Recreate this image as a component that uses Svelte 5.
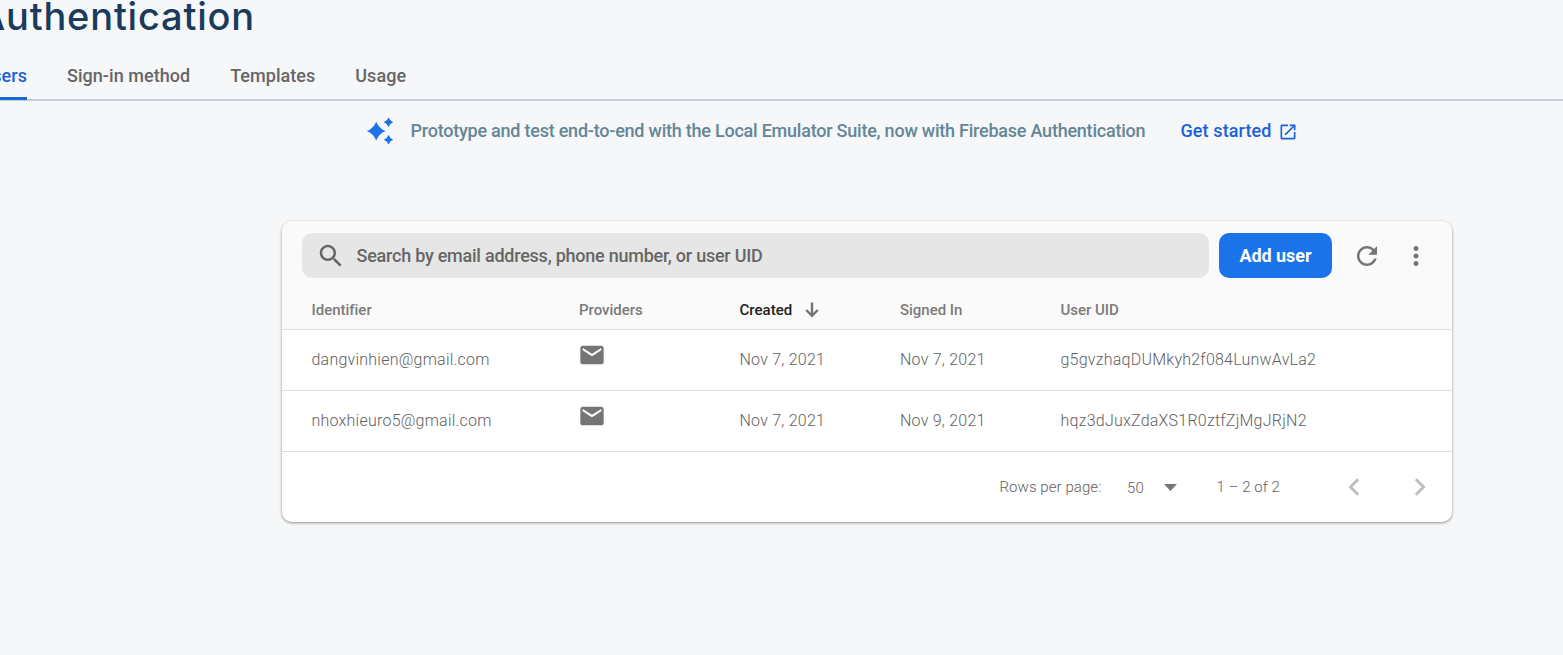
<script>
  const tabs = ['Sign-in method', 'Templates', 'Usage'];
  const users = [
    { id: 'dangvinhien@gmail.com', created: 'Nov 7, 2021', signedIn: 'Nov 7, 2021', uid: 'g5gvzhaqDUMkyh2f084LunwAvLa2' },
    { id: 'nhoxhieuro5@gmail.com', created: 'Nov 7, 2021', signedIn: 'Nov 9, 2021', uid: 'hqz3dJuxZdaXS1R0ztfZjMgJRjN2' }
  ];
</script>

<div class="page">
  <h1><span>Authentication</span></h1>
  <nav>
    <a class="active"><span>Users</span></a>
    {#each tabs as tab}
      <a><span>{tab}</span></a>
    {/each}
  </nav>

  <div class="banner">
    <svg class="spark" width="28" height="28" viewBox="0 0 28 28" fill="#1a73e8">
      <path d="M10.2 4.7Q12.9 11.4 19.6 14.1Q12.9 16.8 10.2 23.5Q7.5 16.8 .8 14.1Q7.5 11.4 10.2 4.7Z" />
      <path d="M22.5.6Q23.8 4 27.2 5.3Q23.8 6.6 22.5 10Q21.2 6.6 17.8 5.3Q21.2 4 22.5.6Z" />
      <path d="M22.5 18.1Q23.8 21.5 27.2 22.8Q23.8 24.1 22.5 27.5Q21.2 24.1 17.8 22.8Q21.2 21.5 22.5 18.1Z" />
    </svg>
    <span class="message">Prototype and test end-to-end with the Local Emulator Suite, now with Firebase Authentication</span>
    <a class="start"><span>Get started</span>
      <svg width="20" height="20" viewBox="0 0 24 24" fill="currentColor"><path d="M19 19H5V5h7V3H5c-1.11 0-2 .9-2 2v14c0 1.1.89 2 2 2h14c1.1 0 2-.9 2-2v-7h-2v7zM14 3v2h3.59l-9.83 9.83 1.41 1.41L19 6.41V10h2V3h-7z" /></svg>
    </a>
  </div>

  <section class="card">
    <div class="top">
      <div class="toolbar">
        <div class="search">
          <svg width="30" height="30" viewBox="0 0 24 24" fill="#666"><path d="M15.5 14h-.79l-.28-.27C15.41 12.59 16 11.11 16 9.5 16 5.91 13.09 3 9.5 3S3 5.91 3 9.5 5.91 16 9.5 16c1.61 0 3.09-.59 4.23-1.57l.27.28v.79l5 4.99L20.49 19l-4.99-5zm-6 0C7.01 14 5 11.99 5 9.5S7.01 5 9.5 5 14 7.01 14 9.5 11.99 14 9.5 14z" /></svg>
          <span>Search by email address, phone number, or user UID</span>
        </div>
        <button class="add">Add user</button>
        <svg class="refresh" width="30" height="30" viewBox="0 0 24 24" fill="#757575"><path d="M17.65 6.35C16.2 4.9 14.21 4 12 4c-4.42 0-7.99 3.58-7.99 8s3.57 8 7.99 8c3.73 0 6.84-2.55 7.73-6h-2.08c-.82 2.33-3.04 4-5.65 4-3.31 0-6-2.69-6-6s2.69-6 6-6c1.66 0 3.14.69 4.22 1.78L13 11h7V4l-2.35 2.35z" /></svg>
        <svg class="more" width="30" height="30" viewBox="0 0 24 24" fill="#757575"><path d="M12 8c1.1 0 2-.9 2-2s-.9-2-2-2-2 .9-2 2 .9 2 2 2zm0 2c-1.1 0-2 .9-2 2s.9 2 2 2 2-.9 2-2-.9-2-2-2zm0 6c-1.1 0-2 .9-2 2s.9 2 2 2 2-.9 2-2-.9-2-2-2z" /></svg>
      </div>
      <div class="row head">
        <span>Identifier</span>
        <span>Providers</span>
        <span class="sorted">Created
          <svg width="14" height="16" viewBox="0 0 14 16" fill="none" stroke="#757575" stroke-width="2.4"><path d="M7 .5v13M1.2 8L7 13.8 12.8 8" /></svg>
        </span>
        <span>Signed In</span>
        <span>User UID</span>
      </div>
    </div>
    {#each users as user}
      <div class="row body">
        <span>{user.id}</span>
        <span class="provider">
          <svg width="28" height="28" viewBox="0 0 24 24" fill="#757575"><path d="M20 4H4c-1.1 0-1.99.9-1.99 2L2 18c0 1.1.9 2 2 2h16c1.1 0 2-.9 2-2V6c0-1.1-.9-2-2-2zm0 4l-8 5-8-5V6l8 5 8-5v2z" /></svg>
        </span>
        <span>{user.created}</span>
        <span>{user.signedIn}</span>
        <span>{user.uid}</span>
      </div>
    {/each}
    <footer>
      <span class="label">Rows per page:</span>
      <span class="size">50</span>
      <svg class="caret" width="13" height="7" viewBox="0 0 13 7" fill="#757575"><path d="M0 0h13L6.5 7z" /></svg>
      <span class="range">1 – 2 of 2</span>
      <svg class="prev" width="12" height="18" viewBox="0 0 12 18" fill="none" stroke="#bdbdbd" stroke-width="2.8"><path d="M10.2 1.2L2.4 9l7.8 7.8" /></svg>
      <svg class="next" width="12" height="18" viewBox="0 0 12 18" fill="none" stroke="#bdbdbd" stroke-width="2.8"><path d="M1.8 1.2L9.6 9l-7.8 7.8" /></svg>
    </footer>
  </section>
</div>

<style>
  :global(body) { background: #f6f7f9; }
  .page {
    height: 655px;
    overflow: hidden;
    background: #f6f7f9;
    font-family: Roboto, sans-serif;
    color: #757575;
  }
  svg { display: block; flex: none; }
  h1 {
    margin: 0;
    height: 52px;
    width: 255px;
    display: flex;
    justify-content: flex-end;
    font: 450 38px/33px Inter, sans-serif;
    letter-spacing: .8px;
    color: #1a3b5c;
  }
  nav {
    height: 47px;
    display: flex;
    gap: 40px;
    border-bottom: 2px solid #c3cfdd;
    font-size: 18px;
    line-height: 48px;
    font-weight: 500;
    color: #666;
    letter-spacing: .04px;
  }
  nav a { white-space: nowrap; }
  .active {
    width: 27px;
    height: 48px;
    display: flex;
    justify-content: flex-end;
    color: #1b62d8;
    box-sizing: border-box;
    border-bottom: 3px solid #1967d2;
    border-radius: 0 3px 0 0;
  }
  .banner {
    height: 60px;
    box-sizing: border-box;
    padding-bottom: 1px;
    display: flex;
    align-items: center;
    padding-left: 366px;
    font-size: 18px;
    font-weight: 500;
    color: #648696;
    white-space: nowrap;
  }
  .message { margin-left: 16.5px; width: 735px; letter-spacing: -.23px; }
  .start {
    margin-left: 35px;
    display: flex;
    align-items: center;
    gap: 6px;
    color: #1b62d8;
    letter-spacing: .1px;
  }
  .start span { width: 91px; }
  .start svg { margin-top: 2px; }
  .card {
    width: 1170px;
    height: 301px;
    margin: 60px 0 0 282px;
    border-radius: 10px;
    overflow: hidden;
    background: #fff;
    box-shadow: 0 1px 3px rgba(0, 0, 0, .24), 0 1px 3px rgba(0, 0, 0, .22);
  }
  .top { background: #fafafa; border-bottom: 1px solid #dedede; height: 108px; }
  .toolbar { display: flex; align-items: center; padding: 12px 20px 0; height: 45px; }
  .search {
    width: 907px;
    height: 45px;
    border-radius: 10px;
    background: #e6e6e6;
    display: flex;
    align-items: center;
    color: #666;
    font-size: 18px;
    font-weight: 500;
    letter-spacing: -.24px;
    white-space: nowrap;
  }
  .search svg { margin-left: 14px; }
  .search span { margin-left: 10.5px; }
  .add {
    margin-left: 10px;
    width: 113px;
    height: 45px;
    padding: 0;
    border: 0;
    border-radius: 10px;
    background: #1a73e8;
    color: #fff;
    font: 700 18px Roboto, sans-serif;
    letter-spacing: -.05px;
  }
  .refresh { margin-left: 19.5px; }
  .more { margin-left: 19.5px; }
  .row {
    display: grid;
    grid-template-columns: 267.5px 160.5px 160.5px 160.5px 1fr;
    padding-left: 29.5px;
    align-items: center;
  }
  .head { height: 51px; padding-top: 12px; box-sizing: border-box; font-size: 15px; font-weight: 500; letter-spacing: -.02px; color: #7a7a7a; }
  .sorted { display: flex; align-items: center; gap: 13px; color: #212121; letter-spacing: .03px; }
  .body { height: 60px; border-bottom: 1px solid #dedede; font-size: 16px; font-weight: 320; letter-spacing: .23px; color: #616161; }
  .body span { padding-bottom: 2px; }
  .body .provider { padding-bottom: 10px; margin-left: -1.5px; }
  footer { height: 69px; display: flex; align-items: center; padding-left: 717.5px; font-size: 15px; font-weight: 320; letter-spacing: .07px; white-space: nowrap; color: #616161; }
  .label { width: 127.5px; }
  .size { width: 37px; padding-top: 2px; }
  .caret { margin-top: 2px; }
  .range { width: 131px; margin-left: 39.5px; }
  .next { margin-left: 54px; }
</style>
